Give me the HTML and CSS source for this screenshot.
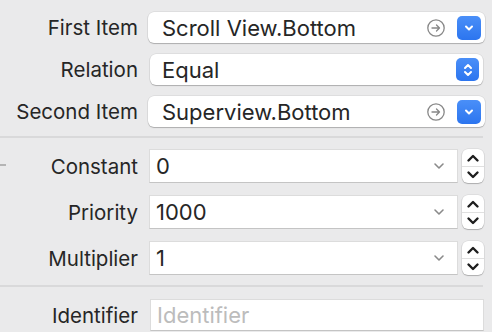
FILE: index.html
```html
<!DOCTYPE html>
<html lang="en">
<head>
	<meta charset="UTF-8">
	<title>Constraint</title>
	<link rel="stylesheet" href="styles.css">
</head>
<body>
	<div class="panel">
		<div class="group items">
			<div class="row">
				<div class="label">First Item</div>
				<div class="popup">
					<span class="value">Scroll View.Bottom</span>
					<svg class="goto" width="18" height="18" viewBox="0 0 18 18"><circle cx="9" cy="9" r="8.2" fill="none" stroke="#888" stroke-width="1.3"/><path d="M5 9h7.5M9.5 6l3 3-3 3" fill="none" stroke="#888" stroke-width="1.3" stroke-linecap="round" stroke-linejoin="round"/></svg>
					<span class="blue"><svg width="12" height="12" viewBox="0 0 12 12"><path d="M3 4.5l3 3 3-3" fill="none" stroke="#fff" stroke-width="2" stroke-linecap="round" stroke-linejoin="round"/></svg></span>
				</div>
			</div>
			<div class="row">
				<div class="label">Relation</div>
				<div class="popup narrow">
					<span class="value">Equal</span>
					<span class="blue small"><svg width="12" height="18" viewBox="0 0 12 18"><path d="M3 7l3-3 3 3M3 11l3 3 3-3" fill="none" stroke="#fff" stroke-width="2" stroke-linecap="round" stroke-linejoin="round"/></svg></span>
				</div>
			</div>
			<div class="row">
				<div class="label">Second Item</div>
				<div class="popup">
					<span class="value">Superview.Bottom</span>
					<svg class="goto" width="18" height="18" viewBox="0 0 18 18"><circle cx="9" cy="9" r="8.2" fill="none" stroke="#888" stroke-width="1.3"/><path d="M5 9h7.5M9.5 6l3 3-3 3" fill="none" stroke="#888" stroke-width="1.3" stroke-linecap="round" stroke-linejoin="round"/></svg>
					<span class="blue"><svg width="12" height="12" viewBox="0 0 12 12"><path d="M3 4.5l3 3 3-3" fill="none" stroke="#fff" stroke-width="2" stroke-linecap="round" stroke-linejoin="round"/></svg></span>
				</div>
			</div>
		</div>
		<div class="sep"></div>
		<div class="group values">
			<div class="tick"></div>
			<div class="row">
				<div class="label">Constant</div>
				<div class="combo">
					<div class="field"><span class="value">0</span><svg class="arrow" width="12" height="8" viewBox="0 0 12 8"><path d="M2 2l4 4 4-4" fill="none" stroke="#8a8a8a" stroke-width="1.6" stroke-linecap="round" stroke-linejoin="round"/></svg></div>
					<div class="stepper"><svg width="14" height="12" viewBox="0 0 14 12"><path d="M2.5 8.5l4.5-4.5 4.5 4.5" fill="none" stroke="#1e1e1e" stroke-width="2.4" stroke-linecap="round" stroke-linejoin="round"/></svg><i></i><svg width="14" height="12" viewBox="0 0 14 12"><path d="M2.5 3.5l4.5 4.5 4.5-4.5" fill="none" stroke="#1e1e1e" stroke-width="2.4" stroke-linecap="round" stroke-linejoin="round"/></svg></div>
				</div>
			</div>
			<div class="row">
				<div class="label">Priority</div>
				<div class="combo">
					<div class="field"><span class="value">1000</span><svg class="arrow" width="12" height="8" viewBox="0 0 12 8"><path d="M2 2l4 4 4-4" fill="none" stroke="#8a8a8a" stroke-width="1.6" stroke-linecap="round" stroke-linejoin="round"/></svg></div>
					<div class="stepper"><svg width="14" height="12" viewBox="0 0 14 12"><path d="M2.5 8.5l4.5-4.5 4.5 4.5" fill="none" stroke="#1e1e1e" stroke-width="2.4" stroke-linecap="round" stroke-linejoin="round"/></svg><i></i><svg width="14" height="12" viewBox="0 0 14 12"><path d="M2.5 3.5l4.5 4.5 4.5-4.5" fill="none" stroke="#1e1e1e" stroke-width="2.4" stroke-linecap="round" stroke-linejoin="round"/></svg></div>
				</div>
			</div>
			<div class="row">
				<div class="label">Multiplier</div>
				<div class="combo">
					<div class="field"><span class="value">1</span><svg class="arrow" width="12" height="8" viewBox="0 0 12 8"><path d="M2 2l4 4 4-4" fill="none" stroke="#8a8a8a" stroke-width="1.6" stroke-linecap="round" stroke-linejoin="round"/></svg></div>
					<div class="stepper"><svg width="14" height="12" viewBox="0 0 14 12"><path d="M2.5 8.5l4.5-4.5 4.5 4.5" fill="none" stroke="#1e1e1e" stroke-width="2.4" stroke-linecap="round" stroke-linejoin="round"/></svg><i></i><svg width="14" height="12" viewBox="0 0 14 12"><path d="M2.5 3.5l4.5 4.5 4.5-4.5" fill="none" stroke="#1e1e1e" stroke-width="2.4" stroke-linecap="round" stroke-linejoin="round"/></svg></div>
				</div>
			</div>
		</div>
		<div class="sep"></div>
		<div class="group ident">
			<div class="row">
				<div class="label">Identifier</div>
				<div class="field wide"><span class="placeholder">Identifier</span></div>
			</div>
		</div>
	</div>
</body>
</html>
```

FILE: styles.css
```css
body{
	margin: 0;
	padding: 0;
	background-color: #eaeaeb;
	font-family: Inter, "Liberation Sans", sans-serif;
	font-size: 20.5px;
	color: #262626;
}
.panel{
	width: 492px;
	height: 332px;
	overflow: hidden;
}
.group{
	position: relative;
	display: flex;
	flex-direction: column;
}
.items{
	padding: 12px 7px 9px 0;
	gap: 11px;
}
.values{
	padding: 11px 8px 10px 0;
	gap: 12px;
}
.ident{
	padding: 12px 8px 0 0;
}
.row{
	display: grid;
	grid-template-columns: 138px 1fr;
	column-gap: 10px;
	align-items: center;
}
.label{
	text-align: right;
	white-space: nowrap;
}
.value,
.placeholder{
	font-size: 22px;
}
.sep{
	height: 2px;
	margin-right: 9px;
	background-color: #d9d9da;
}
.tick{
	position: absolute;
	left: 0;
	top: 26px;
	width: 6px;
	height: 2px;
	background-color: #b4b4b4;
}
/* popup buttons */
.popup{
	height: 31px;
	display: flex;
	align-items: center;
	background-color: #fff;
	border-radius: 6px;
	box-shadow: 0 1px 1px rgba(0,0,0,0.22), 0 0 0 0.5px rgba(0,0,0,0.1);
	padding: 0 4px 0 14px;
}
.popup.narrow{
	margin: 0 2px 0 2px;
	padding-left: 12px;
}
.popup .value{
	flex: 1;
	white-space: nowrap;
}
.goto{
	margin-right: 12px;
}
.blue{
	width: 24px;
	height: 24px;
	border-radius: 5px;
	background: linear-gradient(#4a8ff8, #2c75ef);
	display: flex;
	align-items: center;
	justify-content: center;
}
.blue.small{
	width: 23px;
	height: 23px;
}
/* text fields */
.combo{
	display: flex;
	align-items: center;
	gap: 4px;
	margin-left: 1px;
}
.field{
	flex: 1;
	height: 34px;
	box-sizing: border-box;
	background-color: #fff;
	border: 1px solid #dcdcdc;
	border-bottom-color: #c4c4c4;
	display: flex;
	align-items: center;
	padding: 0 12px 0 6px;
}
.field .value{
	flex: 1;
}
.field.wide{
	height: 32px;
	margin-left: 2px;
	padding-left: 6px;
}
.placeholder{
	color: #bcbcbc;
}
.stepper{
	width: 22px;
	height: 34px;
	background-color: #fff;
	border-radius: 6px;
	box-shadow: 0 1px 1px rgba(0,0,0,0.22), 0 0 0 0.5px rgba(0,0,0,0.1);
	display: flex;
	flex-direction: column;
	align-items: center;
	justify-content: center;
}
.stepper i{
	display: block;
	width: 22px;
	height: 1px;
	background-color: #e0e0e0;
	margin: 2px 0;
}
```
